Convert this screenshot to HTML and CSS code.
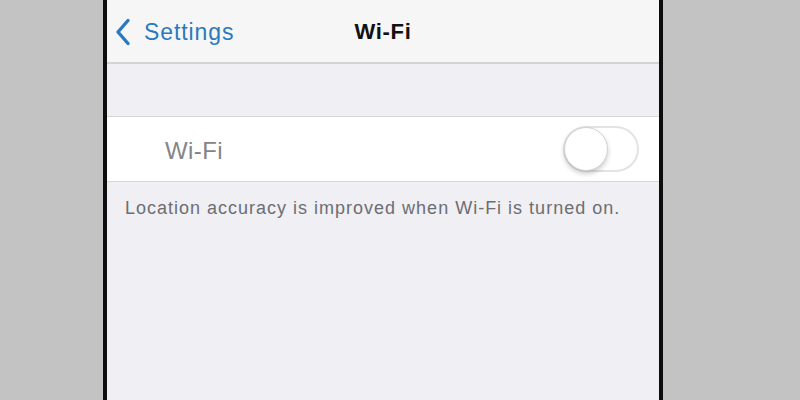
FILE: index.html
```html
<!DOCTYPE html>
<html lang="en">
<head>
<meta charset="utf-8">
<title>Wi-Fi</title>
<link rel="stylesheet" href="styles.css">
</head>
<body>
<div class="device">
  <div class="screen">
    <header class="navbar">
      <a class="back" href="#">
        <svg class="chevron" width="16" height="28" viewBox="0 0 16 28">
          <polyline points="13,2.5 3,14 13,25.5" fill="none" stroke="#2b79bf" stroke-width="3.4" stroke-linecap="round" stroke-linejoin="round"/>
        </svg>
        <span>Settings</span>
      </a>
      <h1 class="title">Wi-Fi</h1>
      <span class="spacer"></span>
    </header>
    <section class="group">
      <div class="cell">
        <span class="cell-label">Wi-Fi</span>
        <span class="switch"><span class="knob"></span></span>
      </div>
      <p class="footnote">Location accuracy is improved when Wi-Fi is turned on.</p>
    </section>
  </div>
</div>
</body>
</html>
```

FILE: styles.css
```css
html, body {
  margin: 0;
  height: 100%;
}

body {
  background: #c3c3c3;
  font-family: "Liberation Sans", Arial, sans-serif;
  overflow: hidden;
}

.device {
  margin-left: 103px;
  width: 552px;
  height: 400px;
  border-left: 4px solid #0d0d0d;
  border-right: 4px solid #0d0d0d;
}

.screen {
  height: 100%;
  background: #efeff4;
  display: flex;
  flex-direction: column;
}

.navbar {
  height: 62px;
  background: #f6f6f6;
  border-bottom: 2px solid #d3d3d6;
  display: grid;
  grid-template-columns: 1fr auto 1fr;
  align-items: center;
}

.back {
  display: flex;
  align-items: center;
  gap: 13px;
  padding-left: 8px;
  color: #2b79bf;
  text-decoration: none;
  font-size: 23px;
  letter-spacing: 0.9px;
  margin-top: 2px;
}

.back .chevron {
  margin-top: -1px;
}

.title {
  margin: 0;
  font-size: 22px;
  font-weight: bold;
  letter-spacing: 0.7px;
  color: #111;
  margin-top: 1px;
}

.group {
  padding-top: 52px;
}

.cell {
  height: 64px;
  background: #fff;
  border-top: 1px solid #d6d6da;
  border-bottom: 1px solid #d6d6da;
  display: flex;
  align-items: center;
  justify-content: space-between;
  padding-left: 58px;
  padding-right: 20px;
}

.cell-label {
  font-size: 24px;
  letter-spacing: 0.4px;
  color: #858589;
  margin-top: 4px;
}

.switch {
  position: relative;
  width: 72px;
  height: 42px;
  border: 2px solid #e3e3e6;
  border-radius: 23px;
  background: #fff;
}

.knob {
  position: absolute;
  left: -1px;
  top: -1px;
  width: 42px;
  height: 42px;
  border-radius: 50%;
  background: #fff;
  border: 1px solid #d2d2d6;
  box-shadow: 0 3px 5px rgba(0, 0, 0, 0.2);
}

.footnote {
  margin: 16px 0 0;
  padding-left: 18px;
  font-size: 18px;
  letter-spacing: 1px;
  color: #6d6d72;
}
```
